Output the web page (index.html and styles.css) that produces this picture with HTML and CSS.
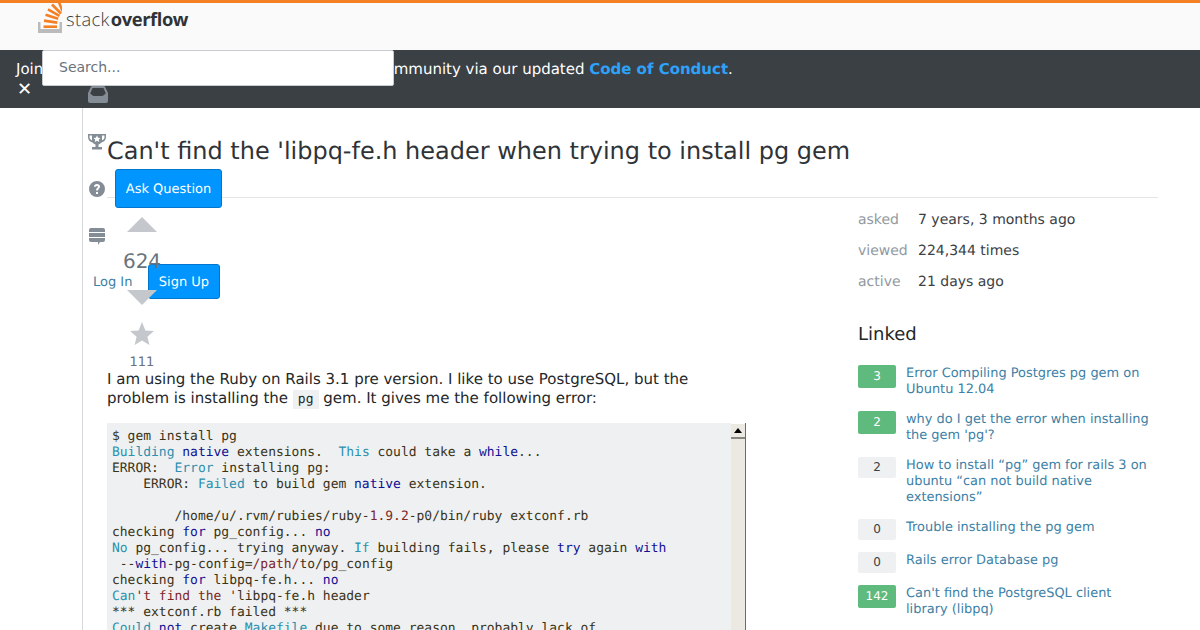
FILE: index.html
```html
<!DOCTYPE html>
<html lang="en">
<head>
<meta charset="utf-8">
<title>Can't find the 'libpq-fe.h header</title>
<link rel="stylesheet" href="styles.css">
</head>
<body>
<header class="topbar">
  <a class="logo">
    <svg class="logo-mark" width="24" height="30" viewBox="0 3 24 30">
      <path fill="#bcbbbb" d="M0 22h2.500v7h19v-7H24v11H0z"/>
      <g stroke="#f48024" stroke-width="2.600" fill="none">
        <path d="M5.500 26.700h13.500"/>
        <path d="M6 20.600l13.300 2"/>
        <path d="M7.500 14.800l12.700 4"/>
        <path d="M10 9.300l11.500 6.600"/>
        <path d="M14 4.500l9 9"/>
        <path d="M20 0l4.500 11"/>
      </g>
    </svg>
    <span class="logo-text"><span class="logo-thin">stack</span><b class="logo-bold">overflow</b></span>
  </a>
</header>
<div class="notice">
  <p class="notice-text">Join us in building a kind, collaborative learning community via our updated <a class="notice-link">Code of Conduct</a>.</p>
  <span class="notice-close">✕</span>
</div>

<input class="search" type="text" placeholder="Search...">

<svg class="nav-icon icon-inbox" width="20" height="17" viewBox="0 0 20 17"><path fill="#848d95" fill-rule="evenodd" d="M4 0h12a1 1 0 0 1 .9.6L20 7v8a2 2 0 0 1-2 2H2a2 2 0 0 1-2-2V7L3.100.6A1 1 0 0 1 4 0zM4.500 2L2.200 7.500C3 8 4 9.500 6 10h8c2-.5 3-2 3.800-2.500L15.500 2z"/></svg>
<svg class="nav-icon icon-trophy" width="18" height="17" viewBox="0 0 18 17"><path fill="#848d95" d="M0 1h18v3c0 3-2 5-4.500 5.400C12.800 10.500 11 11.200 10.500 11.500V14H14v2.500H4V14h3.500v-2.500c-.5-.3-2.300-1-3-2.100C2 9 0 7 0 4zm1.500 1.500V4c0 1.500.8 2.700 2.500 3.200V2.500zm15 0H14v4.700c1.700-.5 2.500-1.700 2.500-3.200z"/><path fill="#fff" d="M9 2.500l1.100 2.200 2.400.3-1.700 1.600.4 2.300L9 7.800 6.800 8.900l.4-2.300L5.500 5l2.400-.3z"/></svg>
<svg class="nav-icon icon-help" width="18" height="18" viewBox="0 0 18 18"><path fill="#848d95" fill-rule="evenodd" d="M9 1a8 8 0 1 1 0 16A8 8 0 0 1 9 1zM8 12v2h2v-2zM9 4C7.200 4 6 5 6 6.700h2C8 6.200 8.400 5.900 9 5.900s1 .3 1 .9c0 1-2 1.400-2 3.700h2c0-1.500 2-2 2-3.900C12 5 10.800 4 9 4z"/></svg>
<a class="btn btn-ask">Ask Question</a>
<svg class="nav-icon icon-chat" width="18" height="18" viewBox="0 0 18 18"><path fill="#848d95" d="M3 1h12a2 2 0 0 1 2 2v2H1V3a2 2 0 0 1 2-2zM1 6h16v4H1zM1 11h16v2a2 2 0 0 1-2 2h-3l-2 3v-3H3a2 2 0 0 1-2-2z"/></svg>
<a class="login">Log In</a>
<a class="btn btn-signup">Sign Up</a>

<main class="content">
  <h1 class="title">Can't find the 'libpq-fe.h header when trying to install pg gem</h1>
  <div class="columns">
    <section class="question">
      <div class="votes">
        <div class="arrow arrow-up"></div>
        <div class="score">624</div>
        <div class="arrow arrow-down"></div>
        <svg class="star" width="26" height="26" viewBox="0 0 26 26"><path fill="#c4c8cc" d="M13 1l3.400 8.400 8.600.7-6.600 5.600 2 8.300L13 19.500l-7.400 4.500 2-8.300L1 10.100l8.600-.7z"/></svg>
        <div class="favs">111</div>
      </div>
      <div class="post">
        <p class="intro">I am using the Ruby on Rails 3.1 pre version. I like to use PostgreSQL, but the problem is installing the <code class="inline-code">pg</code> gem. It gives me the following error:</p>
        <div class="code-box">
<pre class="code">$ gem install pg
<span class="t">Building</span> <span class="k">native</span> extensions.  <span class="t">This</span> could take a <span class="k">while</span>...
ERROR:  <span class="t">Error</span> installing pg:
    ERROR: <span class="t">Failed</span> to build gem <span class="k">native</span> extension.

        /home/u/.rvm/rubies/ruby-<span class="s">1.9.2</span>-p0/bin/ruby extconf.rb
checking <span class="k">for</span> pg_config... <span class="k">no</span>
<span class="t">No</span> pg_config... trying anyway. <span class="t">If</span> building fails, please <span class="k">try</span> again <span class="k">with</span>
 --<span class="k">with</span>-pg-config=<span class="s">/path/</span>to/pg_config
checking <span class="k">for</span> libpq-fe.h... <span class="k">no</span>
<span class="t">Can</span><span class="s">'t find the '</span>libpq-fe.h header
*** extconf.rb failed ***
<span class="t">Could</span> <span class="k">not</span> create <span class="t">Makefile</span> due to some reason, probably lack of</pre>
          <div class="scrollbar"><div class="scroll-btn"><span class="scroll-arrow"></span></div></div>
        </div>
      </div>
    </section>
    <aside class="side">
      <dl class="stats">
        <div class="stat"><dt>asked</dt><dd>7 years, 3 months ago</dd></div>
        <div class="stat"><dt>viewed</dt><dd>224,344 times</dd></div>
        <div class="stat"><dt>active</dt><dd>21 days ago</dd></div>
      </dl>
      <h2 class="linked-title">Linked</h2>
      <ul class="linked">
        <li class="item"><span class="badge on">3</span><a class="item-link">Error Compiling Postgres pg gem on Ubuntu 12.04</a></li>
        <li class="item"><span class="badge on">2</span><a class="item-link">why do I get the error when installing the gem 'pg'?</a></li>
        <li class="item"><span class="badge">2</span><a class="item-link">How to install “pg” gem for rails 3 on ubuntu “can not build native extensions”</a></li>
        <li class="item"><span class="badge">0</span><a class="item-link">Trouble installing the pg gem</a></li>
        <li class="item"><span class="badge">0</span><a class="item-link">Rails error Database pg</a></li>
        <li class="item"><span class="badge on">142</span><a class="item-link">Can't find the PostgreSQL client library (libpq)</a></li>
        <li class="item"><span class="badge on">41</span><a class="item-link">Can't install pg gem on Mountain Lion</a></li>
      </ul>
    </aside>
  </div>
</main>
</body>
</html>
```
FILE: styles.css
```css
* { box-sizing: border-box; }
html, body { margin: 0; height: 630px; overflow: hidden; }
body { position: relative; background: #fff; font-family: "DejaVu Sans", sans-serif; color: #242729; text-rendering: geometricPrecision; }
a { text-decoration: none; }

.topbar { height: 50px; background: #fafafb; border-top: 3px solid #f48024; padding-left: 38px; }
.logo { display: flex; align-items: flex-start; }
.logo-mark { flex: none; }
.logo-text { margin: 3px 0 0 4px; font-family: "Open Sans", sans-serif; font-size: 18.300px; line-height: 28px; color: #3b3b3b; white-space: nowrap; }
.logo-thin { font-weight: 300; letter-spacing: .4px; margin-right: 1px; }
.logo-bold { font-weight: 700; letter-spacing: -.4px; color: #2f3337; }

.notice { height: 58px; background: #3b4045; color: #fff; padding: 9px 16px 0; font-size: 14.990px; line-height: 20px; }
.notice-text { margin: 0; }
.notice-link { color: #2ea2f8; font-weight: 700; }
.notice-close { display: block; margin-top: 1px; padding-left: 1px; font-size: 18px; line-height: 20px; font-weight: 700; }

.search { position: absolute; left: 42px; top: 50px; width: 352px; height: 36px; padding: 0 16px 2px; border: 1px solid #c8ccd0; border-radius: 2px; background: #fff; font: 14px "DejaVu Sans", sans-serif; outline: none; }
.search::placeholder { color: #6a737c; opacity: 1; }

.nav-icon { position: absolute; left: 88px; }
.icon-inbox { top: 86px; }
.icon-trophy { top: 133px; }
.icon-help { top: 180px; }
.icon-chat { top: 227px; }

.btn { position: absolute; display: flex; align-items: center; justify-content: center; padding-top: 2px; background: #0095ff; color: #fff; border: 1px solid #07c; border-radius: 3px; font-size: 13px; }
.btn-ask { left: 115px; top: 169px; width: 107px; height: 39px; }
.btn-signup { left: 148px; top: 264px; width: 72px; height: 35px; }
.login { position: absolute; left: 93px; top: 274px; font-size: 13px; line-height: 17px; color: #3d7fa6; }

.content { margin-left: 82px; border-left: 1px solid #d6d9dc; height: 522px; padding: 24px 41px 0 24px; overflow: hidden; }
.title { margin: 0; font-weight: 400; font-size: 23.970px; line-height: 36px; height: 66px; padding-top: 1px; border-bottom: 1px solid #e4e6e8; color: #2f3337; width: 1051px; }
.columns { display: flex; }
.question { width: 751px; flex: none; position: relative; }

.votes { width: 70px; display: flex; flex-direction: column; align-items: center; padding-top: 19px; }
.arrow { width: 0; height: 0; border-left: 15px solid transparent; border-right: 15px solid transparent; }
.arrow-up { border-bottom: 15px solid #c4c8cc; }
.arrow-down { border-top: 15px solid #c4c8cc; }
.score { font-size: 20px; line-height: 26px; color: #6a737c; margin: 16px 0; }
.star { margin-top: 16px; }
.favs { font-size: 13px; line-height: 19px; height: 17px; color: #6a737c; margin-top: 6px; }

.post { width: 639px; }
.intro { margin: 0 0 15px; font-size: 15px; line-height: 19px; color: #242729; width: 600px; }
.inline-code { font: 13px "DejaVu Sans Mono", monospace; background: #eff0f1; padding: 2px 5px; }
.code-box { display: flex; height: 300px; background: #eff0f1; }
.code { margin: 0; flex: 1; padding: 6px 5px 0; font: 12.970px/16px "DejaVu Sans Mono", monospace; color: #393318; overflow: hidden; }
.t { color: #2b91af; }
.k { color: #101094; }
.s { color: #7d2727; }
.scrollbar { width: 15px; flex: none; background: #ece9e3; border-right: 1px solid #6e6c67; }
.scroll-btn { height: 16px; background: #ece9e3; border-top: 1px solid #fff; border-bottom: 2px solid #8a8781; display: flex; align-items: center; justify-content: center; }
.scroll-arrow { border-left: 4px solid transparent; border-right: 4px solid transparent; border-bottom: 5px solid #000; }

.side { width: 300px; flex: none; }
.stats { margin: 13px 0 0; }
.stat { display: flex; height: 31px; font-size: 14px; line-height: 18px; }
.stat dt { width: 60px; color: #9199a1; }
.stat dd { margin: 0; color: #3b4045; }
.linked-title { margin: 19px 0 18px; font-weight: 400; font-size: 18px; line-height: 24px; color: #242729; }
.linked { list-style: none; margin: 0; padding: 0; }
.item { display: flex; align-items: flex-start; min-height: 21px; margin-bottom: 12px; }
.badge { flex: none; width: 38px; height: 21px; margin-right: 10px; border-radius: 2px; background: #eff0f1; color: #3b4045; font-size: 12px; line-height: 21px; text-align: center; }
.badge.on { background: #5fba7d; color: #fff; height: 23px; line-height: 23px; }
.item-link { width: 246px; padding: 1px 0; font-size: 12.950px; line-height: 16px; color: #3d7fa6; }
```
